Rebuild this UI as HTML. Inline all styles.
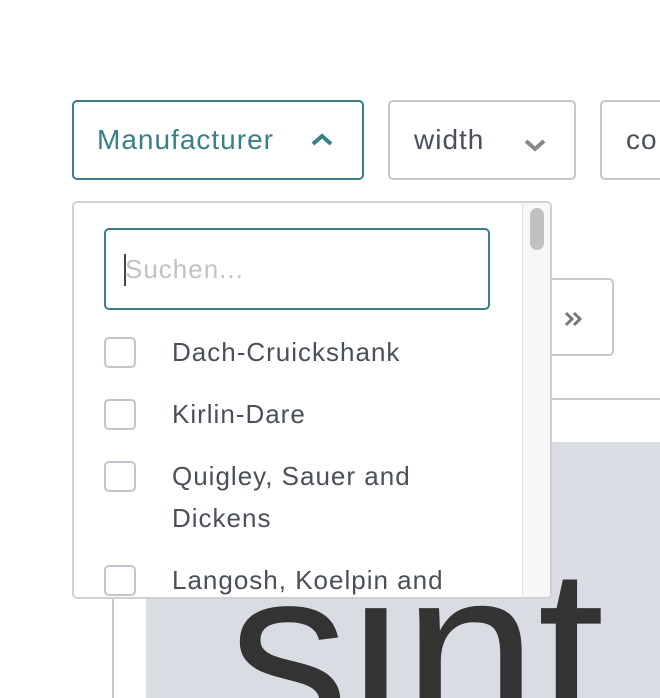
<!DOCTYPE html>
<html><head><meta charset="utf-8"><style>
*{box-sizing:border-box;margin:0;padding:0}
html,body{width:660px;height:698px;overflow:hidden}
body{background:#fff;font-family:"Liberation Sans",sans-serif;position:relative}
.abs{position:absolute}
.btn{position:absolute;top:100px;height:80px;border:2px solid #c4c7cc;border-radius:5px;font-size:28px;letter-spacing:1px;color:#4a5059;line-height:76px;white-space:nowrap;overflow:hidden}
.cb{position:absolute;left:104px;width:32px;height:31px;border:2px solid #c2c5cc;border-radius:5px;background:#fff}
.lbl{position:absolute;left:172px;font-size:26px;letter-spacing:1px;color:#4a5059;line-height:42px}
</style></head><body>
<div class="btn" style="left:72px;width:292px;border-color:#3a7f86;color:#3a7f86;padding-left:23px">Manufacturer
<svg class="abs" style="left:236px;top:30px" width="24" height="16"><path d="M3 12 L12 4 L21 12" stroke="#3a7f86" stroke-width="4" fill="none"/></svg></div>
<div class="btn" style="left:388px;width:188px;padding-left:24px">width
<svg class="abs" style="left:134px;top:35px" width="22" height="16"><path d="M2 4 L11 12 L20 4" stroke="#888" stroke-width="4" fill="none"/></svg></div>
<div class="btn" style="left:600px;width:60px;padding-left:24px;border-right:none;border-radius:5px 0 0 5px">co</div>

<div class="abs" style="left:551px;top:278px;width:63px;height:78px;border:2px solid #c4c7cc;border-left:none;border-radius:0 5px 5px 0">
<svg class="abs" style="left:12px;top:30px" width="22" height="18"><path d="M3 3 L9 9 L3 15 M11 3 L17 9 L11 15" stroke="#777" stroke-width="3" fill="none"/></svg></div>
<div class="abs" style="left:551px;top:398px;width:109px;height:2px;background:#c4c7cc"></div>
<div class="abs" style="left:112px;top:590px;width:2px;height:108px;background:#c4c7cc"></div>
<div class="abs" style="left:146px;top:442px;width:514px;height:256px;background:#d9dce3;overflow:hidden">
<div class="abs" style="left:82px;top:131px;font-size:242px;line-height:160px;height:125px;overflow:hidden;color:#333">sint</div></div>

<div class="abs" style="left:72px;top:201px;width:480px;height:398px;border:2px solid #cfd1d5;border-radius:5px;background:#fff;overflow:hidden">
<div class="abs" style="left:448px;top:0;width:30px;height:396px;background:#f7f7f7;border-left:1px solid #e4e4e4"></div>
<div class="abs" style="left:456px;top:5px;width:14px;height:42px;border-radius:7px;background:#c1c1c1"></div>
</div>
<div class="abs" style="left:104px;top:228px;width:386px;height:82px;border:2px solid #3a7f86;border-radius:5px;font-size:26px;letter-spacing:1px;color:#c0c2c6;line-height:78px;padding-left:19px">Suchen...</div>
<div class="abs" style="left:124px;top:254px;width:2px;height:32px;background:#444"></div>
<div class="cb" style="top:337px"></div><div class="lbl" style="top:331px">Dach-Cruickshank</div>
<div class="cb" style="top:399px"></div><div class="lbl" style="top:393px">Kirlin-Dare</div>
<div class="cb" style="top:461px"></div><div class="lbl" style="top:455px">Quigley, Sauer and<br>Dickens</div>
<div class="abs" style="left:74px;top:560px;width:446px;height:37px;overflow:hidden">
<div class="cb" style="left:30px;top:5px"></div><div class="lbl" style="left:98px;top:-1px">Langosh, Koelpin and</div></div>
</body></html>
